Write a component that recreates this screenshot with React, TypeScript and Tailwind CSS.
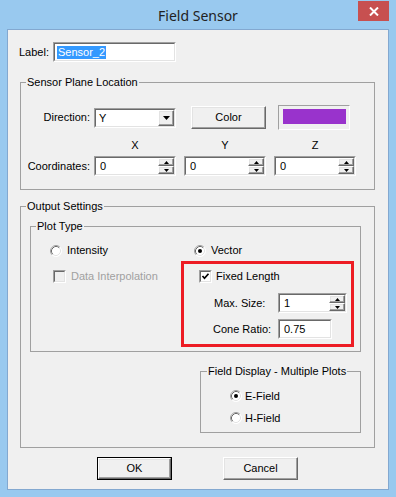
import React from "react";

const raised =
  "border border-t-white border-l-white border-r-[#696969] border-b-[#696969] shadow-[inset_-1px_-1px_0_#a0a0a0,inset_1px_1px_0_#e3e3e3] bg-[#f0f0f0]";

function Sunken({
  className = "",
  children,
  disabled = false,
}: {
  className?: string;
  children?: React.ReactNode;
  disabled?: boolean;
}) {
  return (
    <div
      className={`shrink-0 border border-t-[#a0a0a0] border-l-[#a0a0a0] border-r-white border-b-white ${className}`}
    >
      <div
        className={`flex h-full w-full border border-t-[#696969] border-l-[#696969] border-r-[#e3e3e3] border-b-[#e3e3e3] ${
          disabled ? "bg-[#f0f0f0]" : "bg-white"
        }`}
      >
        {children}
      </div>
    </div>
  );
}

function Arrow({ up }: { up: boolean }) {
  return (
    <svg width="5" height="3" viewBox="0 0 5 3">
      <path d={up ? "M2.5 0 L5 3 L0 3Z" : "M0 0 L5 0 L2.5 3Z"} fill="black" />
    </svg>
  );
}

function Spin({ value, className }: { value: string; className: string }) {
  return (
    <Sunken className={className}>
      <span className="flex-1 self-center pl-[4px] leading-[14px]">{value}</span>
      <div className="flex h-full w-[16px] flex-col">
        <div className={`flex flex-1 items-center justify-center ${raised}`}>
          <Arrow up />
        </div>
        <div className={`flex flex-1 items-center justify-center ${raised}`}>
          <Arrow up={false} />
        </div>
      </div>
    </Sunken>
  );
}

function Radio({ checked }: { checked: boolean }) {
  return (
    <svg width="12" height="12" viewBox="0 0 12 12" className="shrink-0">
      <circle cx="6" cy="6" r="5.5" fill="white" />
      <path d="M2.11 9.89 A5.5 5.5 0 0 1 9.89 2.11" stroke="#a0a0a0" fill="none" />
      <path d="M9.89 2.11 A5.5 5.5 0 0 1 2.11 9.89" stroke="#ffffff" fill="none" />
      <path d="M2.82 9.18 A4.5 4.5 0 0 1 9.18 2.82" stroke="#696969" fill="none" />
      <path d="M9.18 2.82 A4.5 4.5 0 0 1 2.82 9.18" stroke="#e3e3e3" fill="none" />
      {checked && <circle cx="6" cy="6" r="2" fill="black" />}
    </svg>
  );
}

function Check({ checked, disabled = false }: { checked: boolean; disabled?: boolean }) {
  return (
    <Sunken className="h-[13px] w-[13px]" disabled={disabled}>
      <div className="flex h-full w-full items-center justify-center">
        {checked && (
          <svg width="9" height="9" viewBox="0 0 9 9">
            <path d="M1.5 4 L3.5 6.2 L7.5 1.8" stroke="black" strokeWidth="1.7" fill="none" />
          </svg>
        )}
      </div>
    </Sunken>
  );
}

function Group({
  title,
  className,
  legendClass,
  children,
}: {
  title: string;
  className: string;
  legendClass: string;
  children?: React.ReactNode;
}) {
  return (
    <div className={`relative shrink-0 border border-[#a0a0a0] ${className}`}>
      <span className={`absolute -top-[8px] bg-[#f0f0f0] px-[1px] leading-[14px] whitespace-nowrap ${legendClass}`}>
        {title}
      </span>
      {children}
    </div>
  );
}

export default function App() {
  return (
    <div className="flex h-[497px] w-[396px] flex-col bg-[#99c9ef] font-['Liberation_Sans',Arial,sans-serif] text-[11px] text-black">
      {/* Title bar */}
      <div className="grid h-[29px] shrink-0 grid-cols-[1fr_auto_1fr]">
        <div />
        <div className="flex items-center pt-[1px] font-['Noto_Sans',sans-serif] text-[14px] text-[#222]">
          Field Sensor
        </div>
        <div className="flex items-start justify-end">
          <div className="mr-[7px] mt-[1px] flex h-[20px] w-[31px] items-center justify-center bg-[#c75050]">
            <svg width="10" height="9" viewBox="0 0 10 9">
              <path d="M1 0.5 L9 8.5 M9 0.5 L1 8.5" stroke="white" strokeWidth="2" />
            </svg>
          </div>
        </div>
      </div>

      {/* Client */}
      <div className="mx-[7px] flex h-[461px] w-[382px] flex-col border border-[#83a8d0] bg-[#f0f0f0]">
        {/* Label row */}
        <div className="ml-[11px] mt-[12px] flex h-[20px] items-center">
          <span className="w-[34px]">Label:</span>
          <Sunken className="h-[20px] w-[123px]">
            <span className="ml-[2px] self-center bg-[#3399ff] px-[1px] leading-[13px] text-white">Sensor_2</span>
          </Sunken>
        </div>

        {/* Sensor Plane Location */}
        <Group title="Sensor Plane Location" className="ml-[12px] mt-[20px] h-[108px] w-[355px]" legendClass="left-[5px]">
          <div className="mt-[22px] flex h-[25px] items-center">
            <span className="w-[69px] text-right">Direction:</span>
            <Sunken className="ml-[4px] h-[20px] w-[82px]">
              <span className="flex-1 self-center pl-[3px] leading-[14px]">Y</span>
              <div className={`flex h-full w-[16px] items-center justify-center ${raised}`}>
                <svg width="7" height="4" viewBox="0 0 7 4">
                  <path d="M0 0 L7 0 L3.5 4Z" fill="black" />
                </svg>
              </div>
            </Sunken>
            <button className={`ml-[15px] flex h-[23px] w-[75px] items-center justify-center ${raised}`}>Color</button>
            <div className="ml-[12px] h-[25px] w-[72px] border border-t-[#a0a0a0] border-l-[#a0a0a0] border-r-white border-b-white pl-[4px] pt-[3px]">
              <div className="h-[15px] w-[63px] bg-[#9933cc]" />
            </div>
          </div>
          <div className="ml-[73px] mt-[8px] grid h-[14px] grid-cols-[82px_82px_82px] gap-x-[8px] leading-[14px]">
            <span className="text-center">X</span>
            <span className="text-center">Y</span>
            <span className="text-center">Z</span>
          </div>
          <div className="mt-[4px] flex h-[20px] items-center">
            <span className="w-[69px] text-right">Coordinates:</span>
            <Spin value="0" className="ml-[4px] h-[20px] w-[82px]" />
            <Spin value="0" className="ml-[8px] h-[20px] w-[82px]" />
            <Spin value="0" className="ml-[8px] h-[20px] w-[82px]" />
          </div>
        </Group>

        {/* Output Settings */}
        <Group title="Output Settings" className="ml-[12px] mt-[16px] flex h-[242px] w-[355px] flex-col" legendClass="left-[5px]">
          <Group title="Plot Type" className="ml-[9px] mt-[19px] h-[126px] w-[331px]" legendClass="left-[5px]">
            <div className="mt-[17px] flex h-[13px] items-center">
              <div className="ml-[19px] flex w-[144px] items-center gap-[5px]">
                <Radio checked={false} />
                <span>Intensity</span>
              </div>
              <div className="flex items-center gap-[5px]">
                <Radio checked />
                <span>Vector</span>
              </div>
            </div>
            <div className="mt-[4px] flex">
              <div className="ml-[22px] flex h-[13px] w-[128px] items-center gap-[5px] mt-[9px]">
                <Check checked={false} disabled />
                <span className="text-[#a0a0a0]">Data Interpolation</span>
              </div>
              <div className="flex h-[86px] w-[173px] flex-col border-[3px] border-[#ed1c24]">
                <div className="ml-[15px] mt-[6px] flex h-[13px] items-center gap-[4px]">
                  <Check checked />
                  <span>Fixed Length</span>
                </div>
                <div className="ml-[30px] mt-[10px] flex h-[20px] items-center">
                  <span className="w-[64px]">Max. Size:</span>
                  <Spin value="1" className="h-[20px] w-[69px]" />
                </div>
                <div className="ml-[29px] mt-[6px] flex h-[20px] items-center">
                  <span className="w-[65px]">Cone Ratio:</span>
                  <Sunken className="h-[20px] w-[54px]">
                    <span className="self-center pl-[4px] leading-[14px]">0.75</span>
                  </Sunken>
                </div>
              </div>
            </div>
          </Group>

          <Group
            title="Field Display - Multiple Plots"
            className="ml-[179px] mt-[19px] h-[62px] w-[161px]"
            legendClass="left-[6px]"
          >
            <div className="ml-[29px] mt-[18px] flex h-[12px] items-center gap-[3px]">
              <Radio checked />
              <span>E-Field</span>
            </div>
            <div className="ml-[29px] mt-[10px] flex h-[12px] items-center gap-[3px]">
              <Radio checked={false} />
              <span>H-Field</span>
            </div>
          </Group>
        </Group>

        {/* Buttons */}
        <div className="mt-[9px] flex">
          <div className="ml-[89px] h-[23px] w-[75px] border border-black">
            <button className={`flex h-full w-full items-center justify-center ${raised}`}>OK</button>
          </div>
          <button className={`ml-[51px] flex h-[23px] w-[75px] items-center justify-center ${raised}`}>Cancel</button>
        </div>
      </div>
    </div>
  );
}
